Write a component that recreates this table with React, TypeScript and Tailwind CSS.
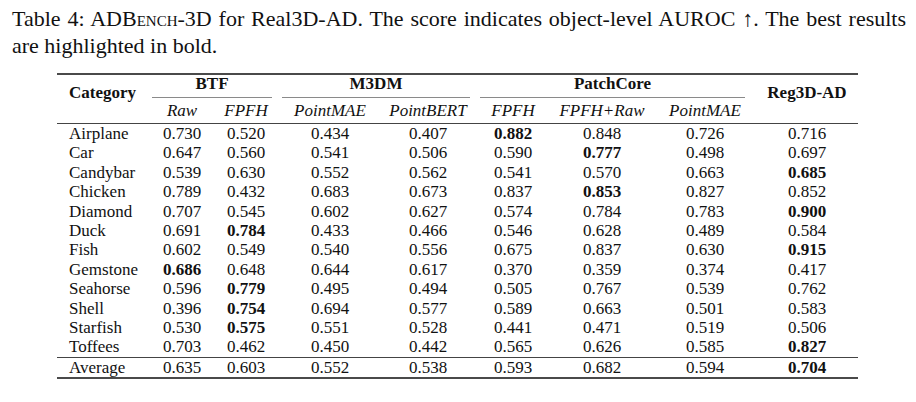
import React from "react";

const cols =
  "grid grid-cols-[95px_60px_68px_100px_96px_74px_104px_102px_102px]";

const rows: [string, string[], number][] = [
  ["Airplane", ["0.730", "0.520", "0.434", "0.407", "0.882", "0.848", "0.726", "0.716"], 4],
  ["Car", ["0.647", "0.560", "0.541", "0.506", "0.590", "0.777", "0.498", "0.697"], 5],
  ["Candybar", ["0.539", "0.630", "0.552", "0.562", "0.541", "0.570", "0.663", "0.685"], 7],
  ["Chicken", ["0.789", "0.432", "0.683", "0.673", "0.837", "0.853", "0.827", "0.852"], 5],
  ["Diamond", ["0.707", "0.545", "0.602", "0.627", "0.574", "0.784", "0.783", "0.900"], 7],
  ["Duck", ["0.691", "0.784", "0.433", "0.466", "0.546", "0.628", "0.489", "0.584"], 1],
  ["Fish", ["0.602", "0.549", "0.540", "0.556", "0.675", "0.837", "0.630", "0.915"], 7],
  ["Gemstone", ["0.686", "0.648", "0.644", "0.617", "0.370", "0.359", "0.374", "0.417"], 0],
  ["Seahorse", ["0.596", "0.779", "0.495", "0.494", "0.505", "0.767", "0.539", "0.762"], 1],
  ["Shell", ["0.396", "0.754", "0.694", "0.577", "0.589", "0.663", "0.501", "0.583"], 1],
  ["Starfish", ["0.530", "0.575", "0.551", "0.528", "0.441", "0.471", "0.519", "0.506"], 1],
  ["Toffees", ["0.703", "0.462", "0.450", "0.442", "0.565", "0.626", "0.585", "0.827"], 7],
];

const average: [string, string[], number] = [
  "Average",
  ["0.635", "0.603", "0.552", "0.538", "0.593", "0.682", "0.594", "0.704"],
  7,
];

function Row({ row }: { row: [string, string[], number] }) {
  const [name, vals, best] = row;
  return (
    <div className={`${cols} h-[19.4px] leading-[19.4px]`}>
      <div className="pl-3">{name}</div>
      {vals.map((v, i) => (
        <div key={i} className={i === best ? "text-center font-bold" : "text-center"}>
          {v}
        </div>
      ))}
    </div>
  );
}

export default function App() {
  return (
    <div
      className="w-[916px] h-[402px] bg-white text-[#111]"
      style={{ fontFamily: '"Liberation Serif", "Times New Roman", serif' }}
    >
      <div className="w-[906px] pl-3 pt-[5px] text-[22px] leading-[27px]">
        <div className="whitespace-nowrap text-justify [text-align-last:justify] [word-spacing:-2px]">
          Table 4: AD<span className="[font-variant:small-caps]">Bench</span>-3D for
          Real3D-AD. The score indicates object-level AUROC ↑. The best results
        </div>
        <div>are highlighted in bold.</div>
      </div>

      <div className="ml-[57px] mt-[14px] w-[801px] text-[17px]">
        <div className="h-[2px] bg-[#4a4a4a]" />
        <div className={`${cols} grid-rows-[22px_1px_25px]`}>
          <div className="col-start-1 row-start-1 row-span-3 pl-3 pt-[9px] font-bold leading-[17px]">
            Category
          </div>
          <div className="col-start-2 col-span-2 row-start-1 mr-[8px] text-center font-bold leading-[17px]">
            BTF
          </div>
          <div className="col-start-4 col-span-2 row-start-1 ml-[2px] mr-[6px] text-center font-bold leading-[17px]">
            M3DM
          </div>
          <div className="col-start-6 col-span-3 row-start-1 ml-[4px] mr-[11px] text-center font-bold leading-[17px]">
            PatchCore
          </div>
          <div className="col-start-9 row-start-1 row-span-3 pt-[9px] text-center font-bold leading-[17px]">
            Reg3D-AD
          </div>

          <div className="col-start-2 col-span-2 row-start-2 mr-[8px] bg-[#8a8a8a]" />
          <div className="col-start-4 col-span-2 row-start-2 ml-[2px] mr-[6px] bg-[#8a8a8a]" />
          <div className="col-start-6 col-span-3 row-start-2 ml-[4px] mr-[11px] bg-[#8a8a8a]" />

          {["Raw", "FPFH", "PointMAE", "PointBERT", "FPFH", "FPFH+Raw", "PointMAE"].map(
            (h, i) => (
              <div
                key={i}
                className="row-start-3 pt-[3px] text-center italic leading-[19.4px]"
                style={{ gridColumnStart: i + 2 }}
              >
                {h}
              </div>
            )
          )}
        </div>
        <div className="h-px bg-[#444]" />
        {rows.map((r) => (
          <Row key={r[0]} row={r} />
        ))}
        <div className="h-px bg-[#444]" />
        <Row row={average} />
        <div className="h-[2px] bg-[#4a4a4a]" />
      </div>
    </div>
  );
}
